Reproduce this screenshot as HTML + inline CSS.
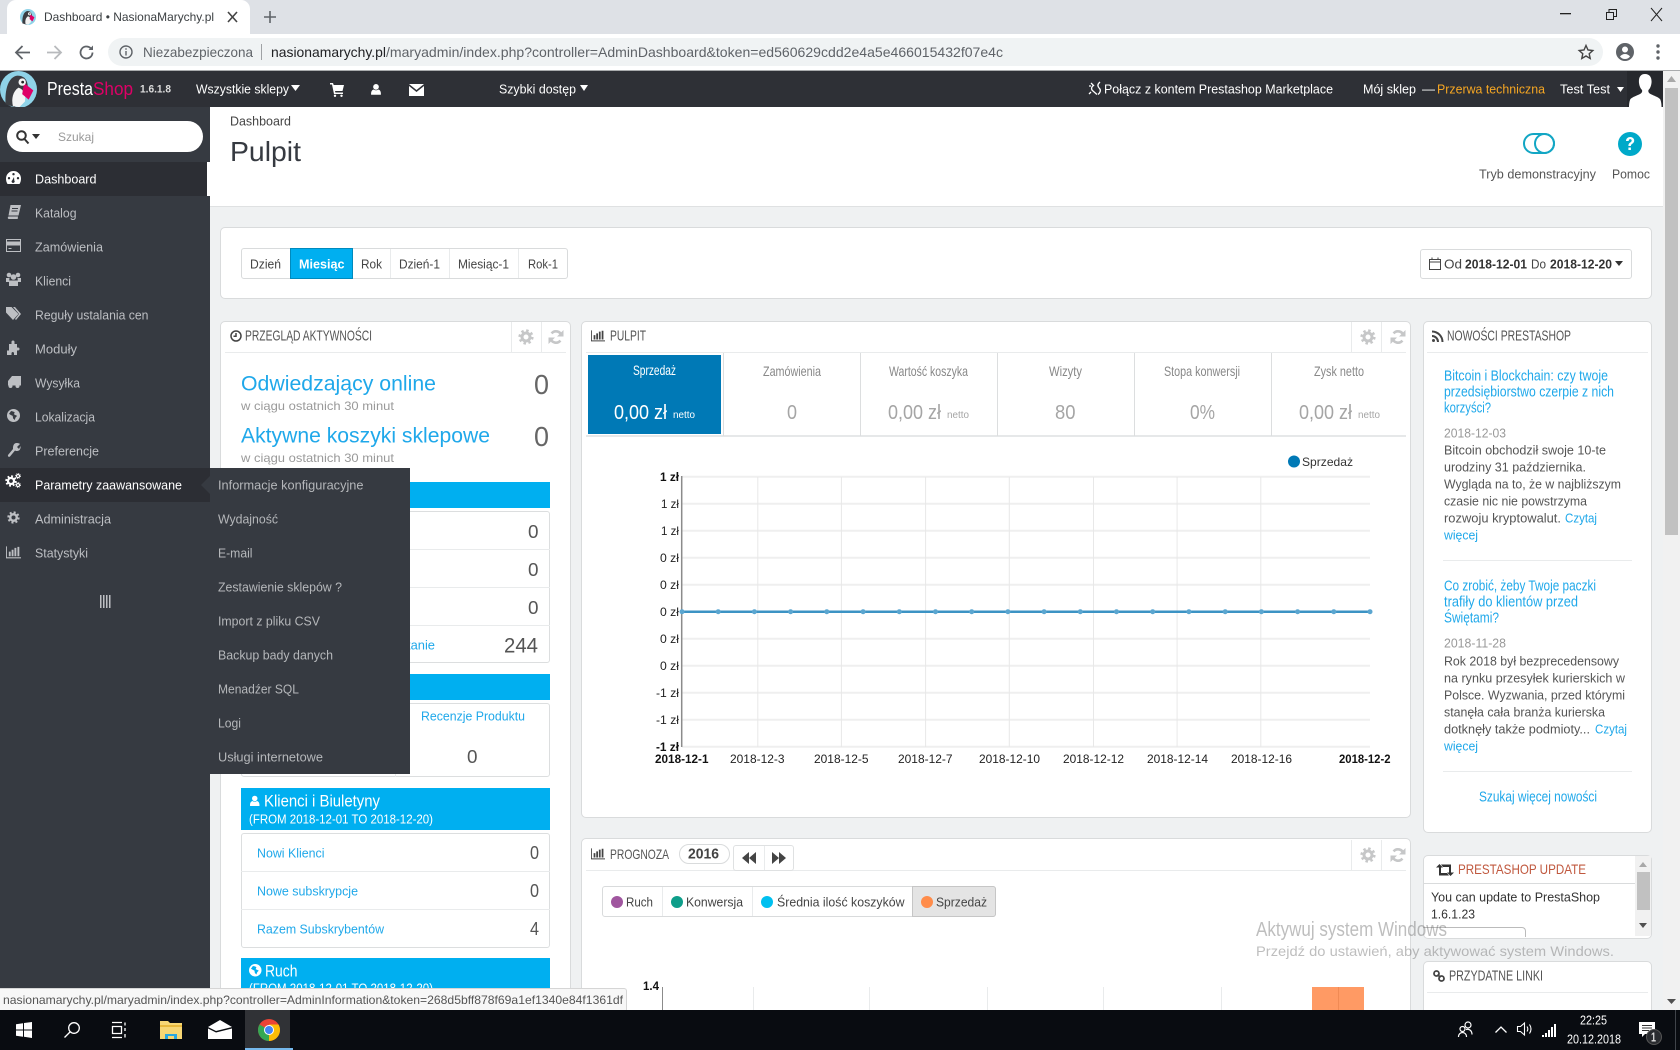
<!DOCTYPE html>
<html lang="pl"><head><meta charset="utf-8"><title>Dashboard • NasionaMarychy.pl</title>
<style>
html,body{margin:0;padding:0}
body{position:relative;width:1680px;height:1050px;overflow:hidden;background:#eff1f2;font-family:"Liberation Sans",Arial,sans-serif;color:#555}
.b,.t,svg.i{position:absolute}
.b{box-sizing:border-box}
.t{white-space:nowrap;line-height:1;font-size:13px;transform:translateY(-50%);transform-origin:left center}
.c{font-family:"Liberation Sans Narrow","Liberation Sans",sans-serif;font-size:15px}
.p{background:#fff;border:1px solid #d9dbdc;border-radius:5px}
.l{background:#e9ebec}
.blue{background:#00aff0}
.a{color:#1fa8ea}
.s{color:#bdbfc3}
.m{color:#b5b7ba}
.w{color:#fff}
.g{color:#c6c7c8}
.k{color:#888;font-size:14px}
.v{color:#a5a5a5;font-size:20px}
.n{font-size:18px;color:#555}
svg.i{overflow:visible}
svg.i:not([fill]){fill:currentColor}
</style></head><body>

<svg width="0" height="0" style="position:absolute"><defs>
<symbol id="cog" viewBox="-8 -8 16 16"><circle r="4" fill="none" stroke="currentColor" stroke-width="3"/><circle r="6.3" fill="none" stroke="currentColor" stroke-width="2.6" stroke-dasharray="2.47 2.47"/></symbol>
<symbol id="ref" viewBox="0 0 16 16"><path d="M13.4 6.6A5.6 5.6 0 0 0 3.600 4.400" fill="none" stroke="currentColor" stroke-width="2.6"/><path d="M15.500 1v6.500H9zM.5 15V8.500H7z"/><path d="M2.600 9.400a5.600 5.600 0 0 0 9.800 2.200" fill="none" stroke="currentColor" stroke-width="2.6"/></symbol>
<symbol id="bar" viewBox="0 0 16 16"><path d="M0 1.500h1V13h15v1.200H0zM3 7h2v5H3zM6 5h2v7H6zM9 3h2v9H9zM12.200 2h2v10h-2z"/></symbol>
<symbol id="user" viewBox="0 0 16 16"><circle cx="8" cy="4.500" r="3.800"/><path d="M1.500 15c-.4-4 1-6.500 3.500-7 1.800 1.400 4.200 1.400 6 0 2.500.5 3.900 3 3.500 7z"/></symbol>
<symbol id="globe" viewBox="0 0 16 16"><path fill-rule="evenodd" d="M8 0a8 8 0 1 1 0 16A8 8 0 0 1 8 0zM5 2.500 2.500 6 5 7.500l2 1 .5 3 2 2 1-3 2-2-2-1-2-1 1-2.500-2-1z"/></symbol>
<symbol id="bird" viewBox="0 0 40 40"><circle cx="20" cy="20" r="20" fill="#8fd3e8"/><path d="M6 36C5 20 9 6 19 5c8 0 11 6 11 12l-5 16-9 6z" fill="#3b3d42"/><path d="M14 38c-2-8 0-16 6-20 6 2 8 8 7 15l-6 6z" fill="#f4f4f4"/><path d="M26 13l10 8-5 10-7-6z" fill="#df0067"/><circle cx="24" cy="12" r="4" fill="#f4f4f4"/><circle cx="24.500" cy="12" r="1.500" fill="#222"/></symbol>
</defs></svg>

<!-- tab strip -->
<div class="b" style="left:0;top:0;width:1680px;height:34px;background:#dee1e6"></div>
<div class="b" style="left:7px;top:0;width:243px;height:34px;background:#fff;border-radius:9px 9px 0 0"></div>
<svg class="i" style="left:20px;top:9px" width="16" height="16"><use href="#bird"/></svg>
<span class="t" style="left:44px;top:17px;font-size:12px;--w:170;color:#3c4043">Dashboard • NasionaMarychy.pl</span>
<svg class="i" fill="none" style="left:228px;top:12px" width="9" height="10" stroke="#444" stroke-width="1.600"><path d="M0 0l9 10M9 0L0 10"/></svg>
<svg class="i" fill="none" style="left:264px;top:11px" width="12" height="12" stroke="#5f6368" stroke-width="1.600"><path d="M6 0v12M0 6h12"/></svg>
<svg class="i" style="left:1560px;top:13px" width="11" height="2"><rect width="11" height="1.300" fill="#222"/></svg>
<svg class="i" style="left:1606px;top:9px" width="11" height="11" fill="none" stroke="#222"><path d="M.5 3.500h7v7h-7zM3 3.500V.5h7.500v7H7.500"/></svg>
<svg class="i" fill="none" style="left:1651px;top:8px" width="11" height="13" stroke="#222" stroke-width="1"><path d="M0 0l11 13M11 0L0 13"/></svg>

<!-- toolbar -->
<div class="b" style="left:0;top:34px;width:1680px;height:37px;background:#fff;border-bottom:1px solid #a9abad"></div>
<svg class="i" style="left:14px;top:45px" width="16" height="15" fill="none" stroke="#5f6368" stroke-width="1.800"><path d="M16 7.500H2M8.500 1L2 7.500 8.500 14"/></svg>
<svg class="i" style="left:47px;top:45px" width="16" height="15" fill="none" stroke="#b8babd" stroke-width="1.800"><path d="M0 7.500h14M7.500 1L14 7.500 7.500 14"/></svg>
<svg class="i" style="left:79px;top:45px" width="15" height="15" fill="none" stroke="#5f6368" stroke-width="1.800"><path d="M13.500 7.500a6 6 0 1 1-1.800-4.300"/><path d="M14 .5v4.500H9.500" fill="#5f6368" stroke="none"/></svg>
<div class="b" style="left:108px;top:38px;width:1495px;height:28px;background:#f0f3f4;border-radius:14px"></div>
<svg class="i" style="left:119px;top:45px" width="14" height="14" fill="none" stroke="#5f6368" stroke-width="1.400"><circle cx="7" cy="7" r="6"/><path d="M7 6v4.500M7 3.200v1.500"/></svg>
<span class="t" style="left:143px;top:52px;font-size:14px;--w:110;color:#5f6368">Niezabezpieczona</span>
<div class="b" style="left:261px;top:44px;width:1px;height:16px;background:#9fa2a5"></div>
<span class="t" style="left:271px;top:52px;font-size:14px;--w:115;color:#202124">nasionamarychy.pl</span>
<span class="t" style="left:386px;top:52px;font-size:14px;--w:617;color:#5f6368">/maryadmin/index.php?controller=AdminDashboard&amp;token=ed560629cdd2e4a5e466015432f07e4c</span>
<svg class="i" style="left:1578px;top:44px" width="16" height="16" fill="none" stroke="#444" stroke-width="1.400"><path d="M8 1.500l2 4.500 4.800.5-3.600 3.200 1 4.800L8 12l-4.200 2.500 1-4.800L1.200 6.500 6 6z"/></svg>
<svg class="i" style="left:1616px;top:43px" width="18" height="18"><path fill="#5f6368" fill-rule="evenodd" d="M9 0a9 9 0 1 1 0 18A9 9 0 0 1 9 0zm0 3.500a3 3 0 1 0 0 6 3 3 0 0 0 0-6zM4 13.500c1 1.500 3 2.500 5 2.500s4-1 5-2.500c-1-1.500-3-2.500-5-2.500s-4 1-5 2.500z"/></svg>
<svg class="i" style="left:1656px;top:44px" width="4" height="16"><circle cx="2" cy="2" r="1.700" fill="#5f6368"/><circle cx="2" cy="8" r="1.700" fill="#5f6368"/><circle cx="2" cy="14" r="1.700" fill="#5f6368"/></svg>

<!-- top admin bar -->
<div class="b" style="left:0;top:71px;width:1680px;height:36px;background:#2e3036"></div>
<svg class="i" style="left:0;top:71px" width="37" height="37"><use href="#bird"/></svg>
<span class="t w" style="left:47px;top:89px;font-size:18px;--w:46">Presta</span>
<span class="t" style="left:93px;top:89px;font-size:18px;--w:40;color:#df0067">Shop</span>
<span class="t w" style="left:140px;top:90px;font-size:11px;font-weight:bold;--w:31;color:#ddd">1.6.1.8</span>
<span class="t w" style="left:196px;top:89px;--w:93">Wszystkie sklepy</span>
<svg class="i w" style="left:291px;top:85px" width="9" height="6"><path d="M0 0h9L4.500 6z"/></svg>
<svg class="i w" style="left:330px;top:83px" width="14" height="14"><path d="M0 0h3l.7 2H14l-1.500 6H5l.4 1.500H13V11H4L2 1.500H0z"/><circle cx="5" cy="12.800" r="1.200"/><circle cx="11.500" cy="12.800" r="1.200"/></svg>
<svg class="i w" style="left:370px;top:82px" width="12" height="15"><use href="#user"/></svg>
<svg class="i w" style="left:409px;top:84px" width="15" height="12"><path d="M0 0h15L7.500 6zM0 2l7.500 6L15 2v10H0z"/></svg>
<span class="t w" style="left:499px;top:89px;--w:77">Szybki dostęp</span>
<svg class="i w" style="left:580px;top:85px" width="8" height="6"><path d="M0 0h8L4 6z"/></svg>
<svg class="i" style="left:1088px;top:81px" width="14" height="16" fill="none" stroke="#fff" stroke-width="1.300"><path d="M3 2l2.500 2.500C3 6 3 8.500 5 10l4 3.500M11 2c-2 2-1 4 .5 5.500s1 4-1.500 6M1 5h2M11 1l1 1M1 13l2-2"/></svg>
<span class="t w" style="left:1104px;top:89px;--w:229">Połącz z kontem Prestashop Marketplace</span>
<span class="t w" style="left:1363px;top:89px;--w:53">Mój sklep</span>
<span class="t w" style="left:1422px;top:89px;--w:13">—</span>
<span class="t" style="left:1437px;top:89px;--w:108;color:#f5a623">Przerwa techniczna</span>
<span class="t w" style="left:1560px;top:89px;--w:50">Test Test</span>
<svg class="i w" style="left:1617px;top:87px" width="7" height="5"><path d="M0 0h7L3.500 5z"/></svg>
<div class="b" style="left:1627px;top:71px;width:36px;height:36px;background:#26282d"></div>
<svg class="i w" style="left:1629px;top:74px" width="32" height="33"><path d="M16 0c5 0 7 4 6.500 9-.3 3-1.500 5.500-3 7-.5 1.500 0 3 2 4 3 1.500 7.500 3 9.500 5 1 1.500 1.500 5 1.500 8H0c0-3 .5-6.500 1.500-8 2-2 6.500-3.500 9.500-5 2-1 2.500-2.500 2-4-1.500-1.500-2.700-4-3-7C9.500 4 11 0 16 0z"/></svg>

<!-- page header -->
<div class="b" style="left:210px;top:107px;width:1453px;height:100px;background:#fff;border-bottom:1px solid #dfe1e2"></div>

<!-- sidebar -->
<nav class="b" style="left:0;top:107px;width:210px;height:903px;background:#363a41"></nav>
<div class="b" style="left:7px;top:121px;width:196px;height:31px;background:#fff;border-radius:16px"></div>
<svg class="i" style="left:16px;top:130px" width="13" height="14" fill="none" stroke="#333" stroke-width="2"><circle cx="5.500" cy="5.500" r="4.300"/><path d="M8.500 9l4 4.500"/></svg>
<svg class="i" style="left:32px;top:134px" width="8" height="5" fill="#333"><path d="M0 0h8L4 5z"/></svg>
<span class="t" style="left:58px;top:137px;font-size:12px;--w:36;color:#999">Szukaj</span>
<div class="b" style="left:0;top:162px;width:207px;height:34px;background:#2c2e34"></div>
<div class="b" style="left:207px;top:162px;width:3px;height:34px;background:#fff"></div>
<div class="b" style="left:0;top:468px;width:210px;height:34px;background:#2c2e34"></div>

<svg class="i w" style="left:6px;top:171px" width="15" height="13"><path fill-rule="evenodd" d="M7.500 0A7.500 7.500 0 0 0 0 7.500C0 9.500.5 11.500 1.500 13h12c1-1.500 1.500-3.500 1.500-5.500A7.500 7.500 0 0 0 7.500 0zM7.500 2a1.200 1.200 0 1 1 0 2.400 1.200 1.200 0 0 1 0-2.400zM3 6a1.200 1.200 0 1 1 0 2.400A1.200 1.200 0 0 1 3 6zm9 0a1.200 1.200 0 1 1 0 2.400A1.200 1.200 0 0 1 12 6zM8 6l.3 3.500a1.500 1.500 0 1 1-2-.3z"/></svg>
<span class="t w" style="left:35px;top:178.500px;--w:61.500">Dashboard</span>
<svg class="i s" style="left:7px;top:205px" width="14" height="14"><path fill-rule="evenodd" d="M3.500 0H14l-2.500 10.500H1.500zM5 3v1h6V3zM4.500 5.500v1h6v-1zM1.500 11.500H11l-.3 2.500H1.500c-1-.7-1-1.800 0-2.500z"/></svg>
<span class="t s" style="left:35px;top:212.500px;--w:41.500">Katalog</span>
<svg class="i" style="left:6px;top:239px" width="15" height="13" fill="none" stroke="#bdbfc3"><rect x=".5" y=".5" width="14" height="12"/><rect x="1" y="3" width="13" height="3" fill="#bdbfc3"/><path d="M2.500 9.500h3"/></svg>
<span class="t s" style="left:35px;top:246.500px;--w:68">Zamówienia</span>
<svg class="i s" style="left:6px;top:272px" width="15" height="14"><circle cx="3" cy="3" r="2.300"/><circle cx="12" cy="3" r="2.300"/><circle cx="7.500" cy="5" r="2.800"/><path d="M0 6h3.500L3 10H0zM11.500 6H15v4h-3zM3 8.500h9V14H3z"/></svg>
<span class="t s" style="left:35px;top:280.500px;--w:36">Klienci</span>
<svg class="i s" style="left:6px;top:307px" width="15" height="13"><path d="M0 0h5.500l7 7-5.500 6L0 5.500zM7 0h2l6 7-5 6-1-1 4-5z"/></svg>
<span class="t s" style="left:35px;top:314.500px;--w:113.500">Reguły ustalania cen</span>
<svg class="i s" style="left:7px;top:341px" width="13" height="14"><path d="M2 3h2.500V1a1.500 1.500 0 0 1 3 0v2H10v3.500h1a1.500 1.500 0 0 1 0 3H10V14H7V12a1.300 1.300 0 0 0-2.500 0v2H0V9.500h2z"/></svg>
<span class="t s" style="left:35px;top:348.500px;--w:42">Moduły</span>
<svg class="i s" style="left:7px;top:376px" width="14" height="12"><path d="M5 0h9v9.500H1V5z"/><circle cx="3.500" cy="10" r="2"/><circle cx="10.500" cy="10" r="2"/></svg>
<span class="t s" style="left:35px;top:382.500px;--w:45">Wysyłka</span>
<svg class="i s" style="left:7px;top:409px" width="13" height="13"><use href="#globe"/></svg>
<span class="t s" style="left:35px;top:416.500px;--w:60">Lokalizacja</span>
<svg class="i s" style="left:7px;top:443px" width="13" height="14"><path d="M9.500 0c2 0 3.500.8 3.500 1L10 4l2 2 1.500-3c.5 3-1 5-3.500 5-.7 0-1.300 0-2-.5L3 13.500C2 14.500.5 13.500 1 12l5-6c-.2-3.500 1-6 3.500-6z"/></svg>
<span class="t s" style="left:35px;top:450.500px;--w:64">Preferencje</span>
<svg class="i w" style="left:5px;top:475px" width="12" height="12"><use href="#cog"/></svg><svg class="i w" style="left:15px;top:473px" width="6" height="6"><use href="#cog"/></svg><svg class="i w" style="left:15px;top:482px" width="6" height="6"><use href="#cog"/></svg>
<span class="t w" style="left:35px;top:484.500px;--w:147">Parametry zaawansowane</span>
<svg class="i s" style="left:7px;top:511px" width="13" height="13"><use href="#cog"/></svg>
<span class="t s" style="left:35px;top:518.500px;--w:76">Administracja</span>
<svg class="i s" style="left:5px;top:545px" width="17" height="15"><use href="#bar"/></svg>
<span class="t s" style="left:35px;top:552.500px;--w:53">Statystyki</span>
<svg class="i s" style="left:100px;top:595px" width="11" height="13"><path d="M0 0h1.500v13H0zM3 0h1.500v13H3zM6 0h1.500v13H6zM9 0h1.500v13H9z"/></svg>

<span class="t" style="left:230px;top:120.500px;--w:61;color:#444">Dashboard</span>
<h1 class="t" style="margin:0;left:230px;top:152px;font-size:28px;font-weight:normal;--w:71;color:#363a41">Pulpit</h1>
<svg class="i" style="left:1523px;top:133px" width="32" height="21" fill="none" stroke="#12a6c4" stroke-width="2"><rect x="1" y="1" width="30" height="19" rx="9.500"/><circle cx="21.500" cy="10.500" r="9.500"/></svg>
<span class="t" style="left:1479px;top:174px;--w:117;color:#555">Tryb demonstracyjny</span>
<svg class="i" style="left:1618px;top:132px" width="24" height="24"><circle cx="12" cy="12" r="12" fill="#00a9c9"/><path d="M8 9c0-2.500 2-4 4.200-4s4 1.500 4 3.500-1.500 3-2.500 3.700c-.7.5-.8 1-.8 1.800h-2.500c0-1.500.3-2.500 1.500-3.300 1-.7 1.800-1.200 1.800-2.200 0-.8-.7-1.400-1.500-1.400s-1.500.6-1.500 1.900zm2.400 6.500h2.500V18h-2.500z" fill="#fff"/></svg>
<span class="t" style="left:1612px;top:174px;--w:38;color:#555">Pomoc</span>

<!-- filter bar -->
<div class="b p" style="left:220px;top:227px;width:1432px;height:72px"></div>
<div class="b" style="left:241px;top:248px;width:327px;height:31px;border:1px solid #d9dbdc;border-radius:3px;background:#fff"></div>
<div class="b" style="left:290px;top:248px;width:63px;height:31px;background:#00aff0;border:1px solid #008abd"></div>
<div class="b l" style="left:390px;top:249px;width:1px;height:29px"></div>
<div class="b l" style="left:449px;top:249px;width:1px;height:29px"></div>
<div class="b l" style="left:518px;top:249px;width:1px;height:29px"></div>
<span class="t" style="left:250px;top:263.500px;--w:31;color:#444">Dzień</span>
<span class="t w" style="left:298.500px;top:263.500px;font-weight:bold;--w:45.500">Miesiąc</span>
<span class="t" style="left:361px;top:263.500px;--w:21;color:#444">Rok</span>
<span class="t" style="left:399px;top:263.500px;--w:41;color:#444">Dzień-1</span>
<span class="t" style="left:458px;top:263.500px;--w:51;color:#444">Miesiąc-1</span>
<span class="t" style="left:527.500px;top:263.500px;--w:30;color:#444">Rok-1</span>
<div class="b" style="left:1420px;top:249px;width:212px;height:30px;border:1px solid #d9dbdc;border-radius:3px;background:#fff"></div>
<svg class="i" style="left:1429px;top:257px" width="12" height="13" fill="none" stroke="#444"><rect x=".5" y="2.500" width="11" height="10"/><path d="M.5 5h11M3 .5V3M9 .5V3"/></svg>
<span class="t" style="left:1444px;top:263.500px;--w:18;color:#444">Od</span>
<span class="t" style="left:1465px;top:263.500px;font-weight:bold;--w:62;color:#333">2018-12-01</span>
<span class="t" style="left:1531px;top:263.500px;--w:15;color:#444">Do</span>
<span class="t" style="left:1550px;top:263.500px;font-weight:bold;--w:62;color:#333">2018-12-20</span>
<svg class="i" style="left:1615px;top:261px" width="8" height="5" fill="#333"><path d="M0 0h8L4 5z"/></svg>

<!-- activity panel -->
<div class="b p" style="left:220px;top:321px;width:351px;height:720px"></div>
<div class="b l" style="left:225px;top:352px;width:341px;height:1px"></div>
<div class="b l" style="left:511px;top:322px;width:1px;height:30px"></div>
<div class="b l" style="left:541px;top:322px;width:1px;height:30px"></div>
<svg class="i" style="left:230px;top:330px" width="12" height="12" fill="none" stroke="#444" stroke-width="1.500"><circle cx="6" cy="6" r="5"/><path d="M6 3v3.200H3.500"/></svg>
<span class="t c" style="left:245px;top:336px;--w:127;color:#555">PRZEGLĄD AKTYWNOŚCI</span>
<svg class="i g" style="left:518px;top:329px" width="16" height="16"><use href="#cog"/></svg>
<svg class="i g" style="left:547.500px;top:329px" width="16" height="16"><use href="#ref"/></svg>
<span class="t a" style="left:241px;top:383.500px;font-size:21px;--w:195">Odwiedzający online</span>
<span class="t" style="left:534px;top:385px;font-size:28px;--w:15;color:#666">0</span>
<span class="t" style="left:241px;top:406px;font-size:12px;--w:153;color:#999">w ciągu ostatnich 30 minut</span>
<span class="t a" style="left:241px;top:435.500px;font-size:21px;--w:249">Aktywne koszyki sklepowe</span>
<span class="t" style="left:534px;top:437px;font-size:28px;--w:15;color:#666">0</span>
<span class="t" style="left:241px;top:458px;font-size:12px;--w:153;color:#999">w ciągu ostatnich 30 minut</span>

<div class="b blue" style="left:241px;top:482px;width:309px;height:26px"></div>
<div class="b" style="left:241px;top:511px;width:309px;height:152px;border:1px solid #dcdedf;border-radius:3px;background:#fff"></div>
<div class="b l" style="left:241px;top:549px;width:309px;height:1px"></div>
<div class="b l" style="left:241px;top:587px;width:309px;height:1px"></div>
<div class="b l" style="left:241px;top:625px;width:309px;height:1px"></div>
<span class="t n" style="left:527.500px;top:532px;--w:10.500">0</span>
<span class="t n" style="left:527.500px;top:570px;--w:10.500">0</span>
<span class="t n" style="left:527.500px;top:608px;--w:10.500">0</span>
<span class="t a" style="left:407px;top:645px;--w:28">tanie</span>
<span class="t" style="left:504px;top:645.500px;font-size:21px;--w:34;color:#555">244</span>

<div class="b blue" style="left:241px;top:674px;width:309px;height:26px"></div>
<div class="b" style="left:241px;top:703px;width:309px;height:74px;border:1px solid #dcdedf;border-radius:3px;background:#fff"></div>
<div class="b l" style="left:395px;top:703px;width:1px;height:74px"></div>
<span class="t a" style="left:421px;top:716px;--w:104">Recenzje Produktu</span>
<span class="t n" style="left:467px;top:757px;--w:10.500">0</span>

<div class="b blue" style="left:241px;top:788px;width:309px;height:42px"></div>
<svg class="i w" style="left:249px;top:795px" width="11.500" height="12"><use href="#user"/></svg>
<span class="t w" style="left:264px;top:801px;font-size:17px;--w:116">Klienci i Biuletyny</span>
<span class="t w" style="left:249px;top:818.500px;--w:184">(FROM 2018-12-01 TO 2018-12-20)</span>
<div class="b" style="left:241px;top:833px;width:309px;height:115px;border:1px solid #dcdedf;border-radius:3px;background:#fff"></div>
<div class="b l" style="left:241px;top:871px;width:309px;height:1px"></div>
<div class="b l" style="left:241px;top:909px;width:309px;height:1px"></div>
<span class="t a" style="left:257px;top:853px;--w:67.500">Nowi Klienci</span>
<span class="t a" style="left:257px;top:891px;--w:101">Nowe subskrypcje</span>
<span class="t a" style="left:257px;top:929px;--w:127">Razem Subskrybentów</span>
<span class="t n" style="left:530px;top:853px;--w:9">0</span>
<span class="t n" style="left:530px;top:891px;--w:9">0</span>
<span class="t n" style="left:530px;top:929px;--w:9">4</span>

<div class="b blue" style="left:241px;top:958px;width:309px;height:60px"></div>
<svg class="i w" style="left:249px;top:964px" width="12.500" height="12.500"><use href="#globe"/></svg>
<span class="t w" style="left:265px;top:971px;font-size:17px;--w:32.500">Ruch</span>
<span class="t w" style="left:249px;top:988px;--w:184">(FROM 2018-12-01 TO 2018-12-20)</span>

<!-- pulpit panel -->
<div class="b p" style="left:581px;top:321px;width:830px;height:497px"></div>
<div class="b l" style="left:586px;top:352px;width:820px;height:1px"></div>
<div class="b l" style="left:1351px;top:322px;width:1px;height:30px"></div>
<div class="b l" style="left:1381px;top:322px;width:1px;height:30px"></div>
<svg class="i" style="left:590px;top:329px;color:#444" width="16" height="14"><use href="#bar"/></svg>
<span class="t c" style="left:610px;top:336px;--w:36;color:#555">PULPIT</span>
<svg class="i g" style="left:1359.500px;top:329px" width="16" height="16"><use href="#cog"/></svg>
<svg class="i g" style="left:1389.500px;top:329px" width="16" height="16"><use href="#ref"/></svg>
<div class="b" style="left:586px;top:352px;width:820px;height:84.500px;border-bottom:2px solid #e6e8e9"></div>
<div class="b" style="left:588px;top:355px;width:133px;height:79px;background:#0079b6"></div>
<div class="b" style="left:723px;top:353px;width:1px;height:83px;background:#dcdedf"></div>
<div class="b" style="left:860px;top:353px;width:1px;height:83px;background:#dcdedf"></div>
<div class="b" style="left:997px;top:353px;width:1px;height:83px;background:#dcdedf"></div>
<div class="b" style="left:1134px;top:353px;width:1px;height:83px;background:#dcdedf"></div>
<div class="b" style="left:1271px;top:353px;width:1px;height:83px;background:#dcdedf"></div>
<span class="t c w" style="left:633px;top:370px;font-size:14px;--w:43">Sprzedaż</span>
<span class="t c k" style="left:762.500px;top:370.500px;--w:58">Zamówienia</span>
<span class="t c k" style="left:889px;top:370.500px;--w:79">Wartość koszyka</span>
<span class="t c k" style="left:1049px;top:370.500px;--w:33">Wizyty</span>
<span class="t c k" style="left:1164px;top:370.500px;--w:76">Stopa konwersji</span>
<span class="t c k" style="left:1314px;top:370.500px;--w:50">Zysk netto</span>
<span class="t w" style="left:614px;top:412.500px;font-size:20px;--w:53">0,00 zł</span>
<span class="t w" style="left:673px;top:416px;font-size:10px;--w:22">netto</span>
<span class="t v" style="left:786.500px;top:412.500px;--w:10">0</span>
<span class="t v" style="left:888px;top:412.500px;--w:53">0,00 zł</span>
<span class="t" style="left:947px;top:416px;font-size:10px;--w:22;color:#a5a5a5">netto</span>
<span class="t v" style="left:1055px;top:412.500px;--w:20.500">80</span>
<span class="t v" style="left:1190px;top:412.500px;--w:25">0%</span>
<span class="t v" style="left:1299px;top:412.500px;--w:53">0,00 zł</span>
<span class="t" style="left:1357.500px;top:416px;font-size:10px;--w:22;color:#a5a5a5">netto</span>

<svg class="i" fill="none" style="left:640px;top:445px" width="760" height="320">
<g stroke="#efefef" stroke-width="2"><path d="M42 31.700h688M42 58.700h688M42 85.700h688M42 112.700h688M42 139.700h688M42 193.700h688M42 220.700h688M42 247.700h688M42 274.700h688M42 301.700h688"/></g>
<g stroke="#e8e8e8" stroke-width="1"><path d="M117.800 32v270M201.400 32v270M285.600 32v270M369.300 32v270M453.500 32v270M537.100 32v270M620.800 32v270"/></g>
<path d="M41.700 31v271" stroke="#8b8b8b" stroke-width="1.500"/>
<path d="M42 166.700h688" stroke="#3c93c4" stroke-width="2.500"/>
<g fill="#5ba6d0"><circle cx="42" cy="166.700" r="2.500"/><circle cx="78.200" cy="166.700" r="2.500"/><circle cx="114.400" cy="166.700" r="2.500"/><circle cx="150.600" cy="166.700" r="2.500"/><circle cx="186.800" cy="166.700" r="2.500"/><circle cx="223.100" cy="166.700" r="2.500"/><circle cx="259.300" cy="166.700" r="2.500"/><circle cx="295.500" cy="166.700" r="2.500"/><circle cx="331.700" cy="166.700" r="2.500"/><circle cx="367.900" cy="166.700" r="2.500"/><circle cx="404.100" cy="166.700" r="2.500"/><circle cx="440.300" cy="166.700" r="2.500"/><circle cx="476.500" cy="166.700" r="2.500"/><circle cx="512.700" cy="166.700" r="2.500"/><circle cx="548.900" cy="166.700" r="2.500"/><circle cx="585.200" cy="166.700" r="2.500"/><circle cx="621.400" cy="166.700" r="2.500"/><circle cx="657.600" cy="166.700" r="2.500"/><circle cx="693.800" cy="166.700" r="2.500"/><circle cx="730" cy="166.700" r="2.500"/></g>
</svg>
<svg class="i" style="left:1288px;top:455px" width="12" height="13"><circle cx="6" cy="6.500" r="6" fill="#0079b6"/></svg>
<span class="t" style="left:1302px;top:461.500px;font-size:12px;--w:51;color:#333">Sprzedaż</span>
<span class="t" style="left:660px;top:476.500px;font-size:12px;font-weight:bold;--w:19;color:#111">1 zł</span>
<span class="t" style="left:661px;top:503.500px;font-size:12px;--w:18;color:#222">1 zł</span>
<span class="t" style="left:661px;top:530.500px;font-size:12px;--w:18;color:#222">1 zł</span>
<span class="t" style="left:660px;top:557.500px;font-size:12px;--w:19;color:#222">0 zł</span>
<span class="t" style="left:660px;top:584.500px;font-size:12px;--w:19;color:#222">0 zł</span>
<span class="t" style="left:660px;top:611.500px;font-size:12px;--w:19;color:#222">0 zł</span>
<span class="t" style="left:660px;top:638.500px;font-size:12px;--w:19;color:#222">0 zł</span>
<span class="t" style="left:660px;top:665.500px;font-size:12px;--w:19;color:#222">0 zł</span>
<span class="t" style="left:656px;top:692.500px;font-size:12px;--w:23;color:#222">-1 zł</span>
<span class="t" style="left:656px;top:719.500px;font-size:12px;--w:23;color:#222">-1 zł</span>
<span class="t" style="left:656px;top:746.500px;font-size:12px;font-weight:bold;--w:23;color:#111">-1 zł</span>
<span class="t" style="left:654.500px;top:759px;font-size:12px;font-weight:bold;--w:53.500;color:#111">2018-12-1</span>
<span class="t" style="left:730px;top:759px;font-size:12px;--w:54.500;color:#222">2018-12-3</span>
<span class="t" style="left:814px;top:759px;font-size:12px;--w:54.500;color:#222">2018-12-5</span>
<span class="t" style="left:898px;top:759px;font-size:12px;--w:54.500;color:#222">2018-12-7</span>
<span class="t" style="left:979px;top:759px;font-size:12px;--w:61;color:#222">2018-12-10</span>
<span class="t" style="left:1063px;top:759px;font-size:12px;--w:61;color:#222">2018-12-12</span>
<span class="t" style="left:1146.500px;top:759px;font-size:12px;--w:61;color:#222">2018-12-14</span>
<span class="t" style="left:1230.500px;top:759px;font-size:12px;--w:61;color:#222">2018-12-16</span>
<span class="t" style="left:1339px;top:759px;font-size:12px;font-weight:bold;--w:51.500;color:#111">2018-12-2</span>

<!-- prognoza panel -->
<div class="b p" style="left:581px;top:838px;width:830px;height:200px"></div>
<div class="b l" style="left:586px;top:870px;width:820px;height:1px"></div>
<div class="b l" style="left:1351px;top:840px;width:1px;height:30px"></div>
<div class="b l" style="left:1381px;top:840px;width:1px;height:30px"></div>
<svg class="i" style="left:590px;top:847px;color:#444" width="16" height="14"><use href="#bar"/></svg>
<span class="t c" style="left:610px;top:854px;font-size:14px;--w:59;color:#555">PROGNOZA</span>
<div class="b" style="left:679px;top:844px;width:51px;height:20px;border:1px solid #d9dbdc;border-radius:10px;background:#fff"></div>
<span class="t c" style="left:688px;top:854px;font-weight:bold;--w:31;color:#444">2016</span>
<div class="b" style="left:733px;top:845px;width:61px;height:26px;border:1px solid #dfe1e2;border-radius:3px;background:#fff"></div>
<div class="b l" style="left:764px;top:846px;width:1px;height:24px"></div>
<svg class="i" style="left:742px;top:852px" width="14" height="12" fill="#444"><path d="M7 0v12L0 6zM14 0v12L7 6z"/></svg>
<svg class="i" style="left:772px;top:852px" width="14" height="12" fill="#444"><path d="M0 0v12l7-6zM7 0v12l7-6z"/></svg>
<svg class="i g" style="left:1359.500px;top:847px" width="16" height="16"><use href="#cog"/></svg>
<svg class="i g" style="left:1389.500px;top:847px" width="16" height="16"><use href="#ref"/></svg>
<div class="b" style="left:602px;top:886px;width:394px;height:31px;border:1px solid #d9dbdc;border-radius:3px;background:#fff"></div>
<div class="b" style="left:912px;top:886px;width:84px;height:31px;background:#e4e4e4;border:1px solid #c6c6c6;border-radius:0 3px 3px 0"></div>
<div class="b l" style="left:662px;top:887px;width:1px;height:29px"></div>
<div class="b l" style="left:752px;top:887px;width:1px;height:29px"></div>
<svg class="i" style="left:611px;top:895.500px" width="12" height="12"><circle cx="6" cy="6" r="6" fill="#a0569f"/></svg>
<span class="t" style="left:626px;top:902px;--w:27;color:#444">Ruch</span>
<svg class="i" style="left:671px;top:895.500px" width="12" height="12"><circle cx="6" cy="6" r="6" fill="#0e9e8a"/></svg>
<span class="t" style="left:686px;top:902px;--w:57;color:#444">Konwersja</span>
<svg class="i" style="left:761px;top:895.500px" width="12" height="12"><circle cx="6" cy="6" r="6" fill="#00c0f0"/></svg>
<span class="t" style="left:776.500px;top:902px;--w:127.500;color:#444">Średnia ilość koszyków</span>
<svg class="i" style="left:921px;top:895.500px" width="12" height="12"><circle cx="6" cy="6" r="6" fill="#ff8c4a"/></svg>
<span class="t" style="left:936px;top:902px;--w:51;color:#444">Sprzedaż</span>
<div class="b" style="left:661.500px;top:987px;width:1px;height:23px;background:#8b8b8b"></div>
<div class="b l" style="left:752.500px;top:987px;width:1px;height:23px"></div>
<div class="b l" style="left:869px;top:987px;width:1px;height:23px"></div>
<div class="b l" style="left:986.500px;top:987px;width:1px;height:23px"></div>
<div class="b l" style="left:1103px;top:987px;width:1px;height:23px"></div>
<div class="b l" style="left:1220.500px;top:987px;width:1px;height:23px"></div>
<div class="b" style="left:1311.500px;top:987px;width:52.500px;height:23px;background:#ff9a64"></div>
<div class="b" style="left:1338px;top:987px;width:1px;height:23px;background:#f08a54"></div>
<span class="t" style="left:643px;top:986px;font-size:12px;font-weight:bold;--w:16;color:#111">1.4</span>

<!-- news panel -->
<div class="b p" style="left:1422.500px;top:321px;width:229.500px;height:512px"></div>
<div class="b l" style="left:1427px;top:352px;width:221px;height:1px"></div>
<svg class="i" style="left:1432px;top:330px" width="12" height="12" fill="none" stroke="#444" stroke-width="2"><path d="M0 1.500a10.500 10.500 0 0 1 10.500 10.500M0 6a6 6 0 0 1 6 6"/><circle cx="1.500" cy="10.500" r="1.500" fill="#444" stroke="none"/></svg>
<span class="t c" style="left:1447px;top:336px;--w:124;color:#555">NOWOŚCI PRESTASHOP</span>
<span class="t c a" style="left:1444px;top:376px;--w:164">Bitcoin i Blockchain: czy twoje</span>
<span class="t c a" style="left:1444px;top:392px;--w:170">przedsiębiorstwo czerpie z nich</span>
<span class="t c a" style="left:1444px;top:408px;--w:47">korzyści?</span>
<span class="t" style="left:1444px;top:433px;--w:62;color:#999">2018-12-03</span>
<span class="t" style="left:1444px;top:450px;--w:162">Bitcoin obchodził swoje 10-te</span>
<span class="t" style="left:1444px;top:467px;--w:142">urodziny 31 października.</span>
<span class="t" style="left:1444px;top:484px;--w:177">Wygląda na to, że w najbliższym</span>
<span class="t" style="left:1444px;top:501px;--w:143">czasie nic nie powstrzyma</span>
<span class="t" style="left:1444px;top:518px;--w:117">rozwoju kryptowalut.</span>
<span class="t a" style="left:1565px;top:518px;--w:32">Czytaj</span>
<span class="t a" style="left:1444px;top:535px;--w:34">więcej</span>
<div class="b l" style="left:1443px;top:560px;width:189px;height:1px"></div>
<span class="t c a" style="left:1444px;top:586px;--w:152">Co zrobić, żeby Twoje paczki</span>
<span class="t c a" style="left:1444px;top:602px;--w:134">trafiły do klientów przed</span>
<span class="t c a" style="left:1444px;top:618px;--w:55">Świętami?</span>
<span class="t" style="left:1444px;top:643px;--w:62;color:#999">2018-11-28</span>
<span class="t" style="left:1444px;top:661px;--w:175">Rok 2018 był bezprecedensowy</span>
<span class="t" style="left:1444px;top:678px;--w:181">na rynku przesyłek kurierskich w</span>
<span class="t" style="left:1444px;top:695px;--w:181">Polsce. Wyzwania, przed którymi</span>
<span class="t" style="left:1444px;top:712px;--w:161">stanęła cała branża kurierska</span>
<span class="t" style="left:1444px;top:729px;--w:146">dotknęły także podmioty...</span>
<span class="t a" style="left:1595px;top:729px;--w:32">Czytaj</span>
<span class="t a" style="left:1444px;top:746px;--w:34">więcej</span>
<div class="b l" style="left:1443px;top:771px;width:189px;height:1px"></div>
<span class="t c a" style="left:1479px;top:797px;--w:118">Szukaj więcej nowości</span>

<!-- update panel -->
<div class="b p" style="left:1422.500px;top:855px;width:229.500px;height:84px"></div>
<svg class="i" style="left:1436px;top:864px" width="18" height="12" fill="#333"><path d="M0 3.500L3.500 0 7 3.500H5V9h6l2 2.500H3V3.500zM18 8.500L14.500 12 11 8.500h2V3H7L5 .5h10v8z"/></svg>
<span class="t" style="left:1458px;top:869px;font-size:14px;--w:128;color:#c0583e">PRESTASHOP UPDATE</span>
<div class="b" style="left:1423px;top:883px;width:212px;height:1px;background:#d9dbdc"></div>
<span class="t" style="left:1431px;top:897px;--w:169;color:#333">You can update to PrestaShop</span>
<span class="t" style="left:1431px;top:914px;--w:44;color:#333">1.6.1.23</span>
<div class="b" style="left:1423px;top:927px;width:103px;height:10px;border:1px solid #bbb;border-width:1px 1px 0 0;border-radius:0 4px 0 0"></div>
<div class="b" style="left:1635px;top:856px;width:16px;height:80px;background:#f1f1f1"></div>
<div class="b" style="left:1637px;top:872px;width:13px;height:38px;background:#c1c1c1"></div>
<svg class="i" style="left:1639px;top:862px" width="8" height="5" fill="#a8a8a8"><path d="M4 0l4 5H0z"/></svg>
<svg class="i" style="left:1639px;top:923px" width="8" height="5" fill="#505050"><path d="M0 0h8L4 5z"/></svg>

<!-- links panel -->
<div class="b p" style="left:1422.500px;top:961px;width:229.500px;height:80px"></div>
<div class="b l" style="left:1427px;top:992px;width:221px;height:1px"></div>
<svg class="i" style="left:1433px;top:970px" width="12" height="12" fill="none" stroke="#444" stroke-width="1.800"><circle cx="3.500" cy="3.500" r="2.500"/><circle cx="8.500" cy="8.500" r="2.500"/><path d="M4.500 4.500l3 3"/></svg>
<span class="t c" style="left:1449px;top:976px;--w:94;color:#555">PRZYDATNE LINKI</span>

<!-- main scrollbar -->
<div class="b" style="left:1663px;top:107px;width:17px;height:903px;background:#f1f1f1"></div>
<div class="b" style="left:1663px;top:71px;width:17px;height:36px;background:#f1f1f1"></div>
<div class="b" style="left:1665px;top:88px;width:13px;height:447px;background:#c1c1c1"></div>
<svg class="i" style="left:1667px;top:76px" width="9" height="6" fill="#a8a8a8"><path d="M4.500 0L9 6H0z"/></svg>
<svg class="i" style="left:1667px;top:999px" width="9" height="5" fill="#505050"><path d="M0 0h9L4.500 5z"/></svg>

<!-- flyout submenu -->
<div class="b" style="left:210px;top:468px;width:200px;height:306px;background:#363a41"></div>
<svg class="i" style="left:201px;top:476px" width="9" height="18" fill="#363a41"><path d="M9 0v18L0 9z"/></svg>
<span class="t m" style="left:218px;top:484.500px;--w:145.500">Informacje konfiguracyjne</span>
<span class="t m" style="left:218px;top:518.500px;--w:60">Wydajność</span>
<span class="t m" style="left:218px;top:552.500px;--w:34.500">E-mail</span>
<span class="t m" style="left:218px;top:586.500px;--w:124">Zestawienie sklepów ?</span>
<span class="t m" style="left:218px;top:620.500px;--w:102">Import z pliku CSV</span>
<span class="t m" style="left:218px;top:654.500px;--w:115">Backup bady danych</span>
<span class="t m" style="left:218px;top:688.500px;--w:81">Menadźer SQL</span>
<span class="t m" style="left:218px;top:722.500px;--w:23">Logi</span>
<span class="t m" style="left:218px;top:756.500px;--w:105">Usługi internetowe</span>

<!-- windows watermark -->
<span class="t" style="left:1256px;top:930px;font-size:20px;--w:191;color:rgba(110,110,110,.45)">Aktywuj system Windows</span>
<span class="t" style="left:1256px;top:951px;font-size:14px;--w:358;color:rgba(110,110,110,.45)">Przejdź do ustawień, aby aktywować system Windows.</span>

<!-- status bubble -->
<div class="b" style="left:0;top:988px;width:627px;height:22px;background:#f7f7f7;border:1px solid #d5d5d5;border-left:0;border-bottom:0;border-radius:0 3px 0 0"></div>
<span class="t" style="left:3px;top:999.500px;font-size:12px;--w:620;color:#555">nasionamarychy.pl/maryadmin/index.php?controller=AdminInformation&amp;token=268d5bff878f69a1ef1340e84f1361df</span>

<!-- taskbar -->
<div class="b" style="left:0;top:1010px;width:1680px;height:40px;background:#090c11"></div>
<svg class="i w" style="left:16px;top:1022px" width="16" height="16"><path d="M0 2.200l7-1V7.500H0zM8 1l8-1v7.500H8zM0 8.500h7v6.300l-7-1zM8 8.500h8V16l-8-1.200z"/></svg>
<svg class="i" style="left:64px;top:1022px" width="16" height="16" fill="none" stroke="#fff" stroke-width="1.300"><circle cx="10" cy="6" r="5.300"/><path d="M6 10l-5.500 5.500"/></svg>
<svg class="i" style="left:112px;top:1022px" width="16" height="16" fill="none" stroke="#fff" stroke-width="1.300"><path d="M0 .5h10M0 15.500h10M.5 4.500h9v7h-9zM13 .5v3M13 6v3M13 12v3.500"/></svg>
<svg class="i" style="left:160px;top:1021px" width="22" height="18"><path d="M0 0h8l2 2h12v16H0z" fill="#f7d774"/><path d="M0 4h22v2H0z" fill="#e8b93c"/><rect x="5" y="13" width="12" height="5" fill="#2aa7df"/><rect x="8" y="15" width="6" height="3" fill="#f7d774"/></svg>
<svg class="i" style="left:208px;top:1020px" width="24" height="19" fill="#fff"><path d="M12 0l12 7L8 11 0 7zM0 8.500l8 4 16-4V19H0z"/></svg>
<div class="b" style="left:245px;top:1010px;width:45px;height:40px;background:#303236"></div>
<div class="b" style="left:245px;top:1048px;width:48px;height:2px;background:#76b9ed"></div>
<svg class="i" style="left:258px;top:1019px" width="22" height="22" viewBox="0 0 22 22"><circle cx="11" cy="11" r="11" fill="#ea4335"/><path d="M11 11L1.500 5.500A11 11 0 0 0 11 22z" fill="#34a853"/><path d="M11 11l9.500-5.500H11zM11 11v11A11 11 0 0 0 20.500 5.500z" fill="#fbbc05"/><circle cx="11" cy="11" r="5" fill="#fff"/><circle cx="11" cy="11" r="4" fill="#4285f4"/></svg>
<svg class="i" style="left:1458px;top:1021px" width="15" height="17" fill="none" stroke="#fff" stroke-width="1.200"><circle cx="10" cy="4" r="3"/><circle cx="4.500" cy="8" r="2.500"/><path d="M.5 16c0-3 2-4.500 4-4.500s4 1.500 4 4.500M8 8.500c3-1 6 1 6 5"/></svg>
<svg class="i" style="left:1495px;top:1026px" width="12" height="7" fill="none" stroke="#fff" stroke-width="1.300"><path d="M.5 6.500L6 1l5.500 5.500"/></svg>
<svg class="i" style="left:1517px;top:1022px" width="16" height="14" fill="none" stroke="#fff" stroke-width="1.100"><path d="M.5 4.500h3L7.500 1v12l-4-3.500h-3zM10 4.500c1 1.500 1 3.500 0 5M12.500 2.500c2 3 2 6 0 9"/></svg>
<svg class="i" style="left:1542px;top:1024px" width="14" height="13" fill="#fff"><path d="M0 11h2v2H0zM3 9h2v4H3zM6 6h2v7H6zM9 3h2v10H9zM12 0h2v13h-2z"/></svg>
<span class="t w" style="left:1580px;top:1020px;--w:27">22:25</span>
<span class="t w" style="left:1567px;top:1039px;--w:54">20.12.2018</span>
<svg class="i" style="left:1639px;top:1022px" width="16" height="15"><path d="M0 0h16v12H6l-3 3v-3H0z" fill="#fff"/><path d="M3 3.500h10M3 6h10M3 8.500h7" stroke="#333"/></svg>
<svg class="i" style="left:1646px;top:1029px" width="16" height="16"><circle cx="8" cy="8" r="7.500" fill="#2a2c30" stroke="#555"/></svg>
<span class="t" style="left:1651px;top:1037px;font-weight:bold;--w:5;color:#ddd">1</span>
<div class="b" style="left:1675px;top:1010px;width:1px;height:40px;background:#40444a"></div>

<script>
document.querySelectorAll('.t').forEach(function(e){var w=parseFloat(e.style.getPropertyValue('--w'));if(!w)return;var r=e.getBoundingClientRect().width;if(r)e.style.transform='translateY(-50%) scaleX('+(w/r)+')';});
</script>
</body></html>
